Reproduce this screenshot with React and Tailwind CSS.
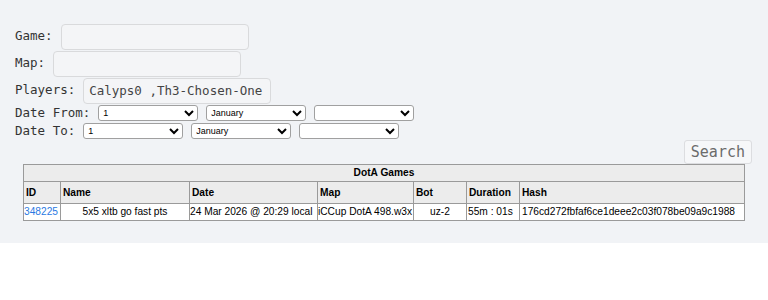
import React from "react";

const mono = "font-['DejaVu_Sans_Mono',monospace]";

const days = ["1", "2", "3"];
const months = ["January", "February", "March"];

const TextRow = ({ label, value }) => (
  <div className="flex h-[27px] items-center gap-2">
    <span className="text-[12.5px] text-[#333]">{label}</span>
    <input
      defaultValue={value}
      className="h-[26px] w-[188px] rounded-[4px] border border-[#d9dadc] bg-[#f4f5f7] px-[5px] text-[12.5px] text-[#444] outline-none"
    />
  </div>
);

const DateSelects = ({ label }) => (
  <div className="flex h-[18px] items-center gap-2">
    <span className="text-[12.5px] text-[#333]">{label}</span>
    <div className="flex gap-2">
      <select className="h-[16px] w-[100px] rounded-[3px] border border-[#a0a0a0] bg-white text-[9px] font-['Liberation_Sans',sans-serif] text-black">
        {days.map((d) => (
          <option key={d}>{d}</option>
        ))}
      </select>
      <select className="h-[16px] w-[100px] rounded-[3px] border border-[#a0a0a0] bg-white text-[9px] font-['Liberation_Sans',sans-serif] text-black">
        {months.map((m) => (
          <option key={m}>{m}</option>
        ))}
      </select>
      <select className="h-[16px] w-[100px] rounded-[3px] border border-[#a0a0a0] bg-white text-[9px] font-['Liberation_Sans',sans-serif] text-black">
        <option></option>
      </select>
    </div>
  </div>
);

const cols = [
  ["ID", "w-[37px]"],
  ["Name", "w-[129px]"],
  ["Date", "w-[128px]"],
  ["Map", "w-[96px]"],
  ["Bot", "w-[53px]"],
  ["Duration", "w-[53px]"],
  ["Hash", ""],
];

export default function App() {
  return (
    <div className="min-h-screen bg-white">
      <div className={`bg-[#f1f3f6] pb-[22px] pt-[23px] ${mono}`}>
        <div className="px-[15px]">
          <TextRow label="Game:" value="" />
          <TextRow label="Map:" value="" />
          <TextRow label="Players:" value="Calyps0 ,Th3-Chosen-One" />
          <DateSelects label="Date From:" />
          <DateSelects label="Date To:" />
        </div>
        <div className="flex justify-end pr-[16px]">
          <button className="h-[24px] rounded-[3px] border border-[#dcdde0] bg-[#f6f7f9] px-[6px] text-[15px] text-[#6b6b6b]">
            Search
          </button>
        </div>
        <div className="px-[23px] font-['Liberation_Sans',sans-serif] text-[10.2px] text-black">
          <table className="w-full table-fixed border-collapse bg-white">
            <colgroup>
              {cols.map(([c, w]) => (
                <col key={c} className={w} />
              ))}
            </colgroup>
            <thead>
              <tr className="h-[17px] bg-[#ececec]">
                <th colSpan={7} className="border border-[#9a9a9a] text-center font-bold">
                  DotA Games
                </th>
              </tr>
              <tr className="h-[22px] bg-[#ececec]">
                {cols.map(([c]) => (
                  <th key={c} className="border border-[#9a9a9a] px-[2px] text-left font-bold">
                    {c}
                  </th>
                ))}
              </tr>
            </thead>
            <tbody>
              <tr className="h-[17px] whitespace-nowrap">
                <td className="border border-[#9a9a9a] px-0 text-[#2a7ae2]">348225</td>
                <td className="border border-[#9a9a9a] text-center">5x5 xltb go fast pts</td>
                <td className="border border-[#9a9a9a] px-0">24 Mar 2026 @ 20:29 local</td>
                <td className="border border-[#9a9a9a] px-0">iCCup DotA 498.w3x</td>
                <td className="border border-[#9a9a9a] text-center">uz-2</td>
                <td className="border border-[#9a9a9a] px-[1px]">55m : 01s</td>
                <td className="border border-[#9a9a9a] px-[2px]">176cd272fbfaf6ce1deee2c03f078be09a9c1988</td>
              </tr>
            </tbody>
          </table>
        </div>
      </div>
    </div>
  );
}
